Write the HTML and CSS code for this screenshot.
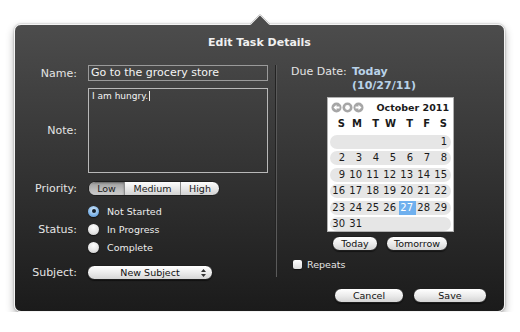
FILE: index.html
```html
<!DOCTYPE html>
<html lang="en">
<head>
  <meta charset="UTF-8" />
  <title>Edit Task Details</title>
  <link rel="stylesheet" href="styles.css">
</head>
<body>
  <div class="panel">
    <div class="beak"></div>
    <h1 class="title">Edit Task Details</h1>

    <div class="columns">
      <div class="form">
        <div class="row name-row">
          <span class="lbl">Name:</span>
          <div class="text-field">Go to the grocery store</div>
        </div>
        <div class="row note-row">
          <span class="lbl">Note:</span>
          <div class="note-field">I am hungry.<span class="caret"></span></div>
        </div>
        <div class="row priority-row">
          <span class="lbl">Priority:</span>
          <div class="segmented">
            <span class="seg low on">Low</span><span class="seg medium">Medium</span><span class="seg high">High</span>
          </div>
        </div>
        <div class="row status-row">
          <span class="lbl">Status:</span>
          <div class="radios">
            <div class="radio on"><span class="knob"></span>Not Started</div>
            <div class="radio"><span class="knob"></span>In Progress</div>
            <div class="radio"><span class="knob"></span>Complete</div>
          </div>
        </div>
        <div class="row subject-row">
          <span class="lbl">Subject:</span>
          <div class="popup">
            <span>New Subject</span>
            <svg class="updown" width="5" height="8" viewBox="0 0 5 8"><path d="M2.5 0 L5 3 H0 Z M0 5 H5 L2.5 8 Z" fill="#333"/></svg>
          </div>
        </div>
      </div>

      <div class="due">
        <div class="due-line">
          <span class="due-lbl">Due Date:</span>
          <span class="due-val">Today<br>(10/27/11)</span>
        </div>

        <div class="cal">
          <div class="cal-head">
            <svg class="nav" width="33" height="11" viewBox="0 0 33 11">
              <circle cx="5.5" cy="5.5" r="5" fill="#a6a6a6"/>
              <path d="M2.5 5.5 L5.5 2.8 V4.4 H8.5 V6.6 H5.5 V8.2 Z" fill="#fff"/>
              <circle cx="16.5" cy="5.5" r="5" fill="#a6a6a6"/>
              <circle cx="16.5" cy="5.5" r="2.4" fill="#fff"/>
              <circle cx="27.5" cy="5.5" r="5" fill="#a6a6a6"/>
              <path d="M30.5 5.5 L27.5 2.8 V4.4 H24.5 V6.6 H27.5 V8.2 Z" fill="#fff"/>
            </svg>
            <span class="month">October 2011</span>
          </div>
          <div class="wk head"><span>S</span><span>M</span><span>T</span><span>W</span><span>T</span><span>F</span><span>S</span></div>
          <div class="wk pill"><span></span><span></span><span></span><span></span><span></span><span></span><span>1</span></div>
          <div class="wk pill"><span>2</span><span>3</span><span>4</span><span>5</span><span>6</span><span>7</span><span>8</span></div>
          <div class="wk pill"><span>9</span><span>10</span><span>11</span><span>12</span><span>13</span><span>14</span><span>15</span></div>
          <div class="wk pill"><span>16</span><span>17</span><span>18</span><span>19</span><span>20</span><span>21</span><span>22</span></div>
          <div class="wk pill"><span>23</span><span>24</span><span>25</span><span>26</span><span class="sel">27</span><span>28</span><span>29</span></div>
          <div class="wk pill"><span>30</span><span>31</span><span></span><span></span><span></span><span></span><span></span></div>
        </div>

        <div class="quick">
          <button class="btn today">Today</button>
          <button class="btn tomorrow">Tomorrow</button>
        </div>

        <div class="repeats"><span class="check"></span>Repeats</div>
      </div>
    </div>

    <div class="footer">
      <button class="btn cancel">Cancel</button>
      <button class="btn save">Save</button>
    </div>
  </div>
</body>
</html>
```

FILE: styles.css
```css
body {
  margin: 0;
  background: #fff;
  font-family: 'DejaVu Sans', Verdana, sans-serif;
  color: #e6e6e6;
}

.panel {
  position: relative;
  box-sizing: border-box;
  width: 491px;
  height: 288px;
  margin: 24px 0 0 14px;
  border: 1px solid #f4f4f4;
  border-radius: 7px;
  background: linear-gradient(#4c4c4c, #1b1b1b);
  box-shadow: 0 0 2px rgba(0,0,0,0.35), 0 4px 9px rgba(0,0,0,0.3);
}

.beak {
  position: absolute;
  left: 238px;
  top: -8px;
  width: 13px;
  height: 13px;
  background: #4c4c4c;
  border-top: 1px solid #f4f4f4;
  border-left: 1px solid #f4f4f4;
  transform: rotate(45deg);
}

.title {
  margin: 0 0 15px;
  padding-top: 11px;
  font-size: 11px;
  line-height: 14px;
  font-weight: bold;
  text-align: center;
  color: #f0f0f0;
}

.columns {
  display: flex;
  height: 212px;
}

/* left side */
.form {
  width: 261px;
}
.row {
  display: flex;
}
.lbl {
  width: 62px;
  margin-right: 11px;
  text-align: right;
  font-size: 11px;
  align-self: center;
  color: #e4e4e4;
}
.text-field {
  box-sizing: border-box;
  width: 180px;
  height: 16px;
  border: 1px solid #9a9a9a;
  padding-left: 2px;
  font-size: 11px;
  line-height: 14px;
  color: #f4f4f4;
}
.note-row {
  margin-top: 7px;
}
.note-field {
  box-sizing: border-box;
  width: 180px;
  height: 85px;
  border: 1px solid #b8b8b8;
  padding: 2px 3px;
  font-size: 9px;
  line-height: 11px;
  color: #f4f4f4;
}
.caret {
  display: inline-block;
  width: 1px;
  height: 10px;
  margin-left: 1px;
  vertical-align: -2px;
  background: #eee;
}

.priority-row {
  margin-top: 8px;
}
.segmented {
  display: flex;
  height: 15px;
  border: 1px solid #1e1e1e;
  border-radius: 8px;
  overflow: hidden;
  box-sizing: border-box;
  background: linear-gradient(#fdfdfd, #e6e6e6 55%, #d2d2d2);
}
.seg {
  font-size: 9.5px;
  line-height: 13px;
  color: #1a1a1a;
  text-align: center;
  border-left: 1px solid #8c8c8c;
}
.seg.low { width: 35px; border-left: none; }
.seg.medium { width: 55px; }
.seg.high { width: 38px; }
.seg.on {
  background: linear-gradient(#9c9c9c, #bdbdbd 60%, #cbcbcb);
  box-shadow: inset 0 1px 2px rgba(0,0,0,0.35);
}

.status-row {
  margin-top: 6px;
}
.radios {
  display: flex;
  flex-direction: column;
}
.radio {
  display: flex;
  align-items: center;
  height: 18px;
  font-size: 9.5px;
  color: #ececec;
}
.knob {
  box-sizing: border-box;
  width: 11px;
  height: 11px;
  margin-right: 8px;
  border-radius: 50%;
  background: radial-gradient(circle at 50% 30%, #fff, #e4e4e4 60%, #bdbdbd);
  box-shadow: 0 1px 1px rgba(0,0,0,0.6);
  display: flex;
  align-items: center;
  justify-content: center;
}
.radio.on .knob {
  background: radial-gradient(circle at 50% 35%, #d8ebfb, #7fb4e8 60%, #4b86c8);
}
.radio.on .knob::after {
  content: '';
  width: 4px;
  height: 4px;
  border-radius: 50%;
  background: #15202c;
}

.subject-row {
  margin-top: 9px;
}
.popup {
  position: relative;
  box-sizing: border-box;
  width: 126px;
  height: 15px;
  margin-left: -1px;
  border: 1px solid #1e1e1e;
  border-radius: 8px;
  background: linear-gradient(#ffffff, #ececec 50%, #d6d6d6);
  box-shadow: 0 1px 1px rgba(0,0,0,0.5);
  font-size: 9.5px;
  line-height: 13px;
  color: #111;
  text-align: center;
}
.updown {
  position: absolute;
  right: 6px;
  top: 3px;
}

/* right side */
.due {
  flex: 1;
  border-left: 1px solid #5a5a5a;
  box-shadow: -1px 0 #232323;
}
.due-line {
  display: flex;
  padding-left: 14px;
  font-size: 11px;
  line-height: 14px;
}
.due-lbl {
  width: 61px;
  color: #e4e4e4;
}
.due-val {
  font-weight: bold;
  color: #b9d2e8;
}

.cal {
  box-sizing: border-box;
  width: 127px;
  height: 135px;
  margin: 4px 0 0 50px;
  padding: 0 2px;
  background: #fff;
  border: 1px solid #b0b0b0;
  color: #1a1a1a;
}
.cal-head {
  display: flex;
  align-items: center;
  justify-content: space-between;
  height: 18px;
  padding: 0 2px 0 1px;
}
.nav {
  display: block;
}
.month {
  font-size: 9.5px;
  font-weight: bold;
}
.wk {
  display: grid;
  grid-template-columns: repeat(7, 17px);
  box-sizing: border-box;
  width: 121px;
  padding-left: 1px;
  font-size: 10px;
}
.wk span {
  text-align: right;
  padding-right: 3px;
  line-height: 14px;
}
.wk.head {
  height: 16px;
  align-items: center;
  font-weight: bold;
  margin-bottom: 3px;
}
.pill {
  height: 14px;
  margin-bottom: 2.4px;
  border-radius: 7px;
  background: #e6e6e6;
}
.pill .sel {
  background: #6fb0ee;
  color: #fff;
}

.quick {
  display: flex;
  justify-content: center;
  gap: 8px;
  margin-top: 4px;
  padding-right: 1px;
}
.btn {
  box-sizing: border-box;
  height: 15px;
  padding: 0;
  border: 1px solid #1e1e1e;
  border-radius: 8px;
  background: linear-gradient(#ffffff, #ececec 50%, #d4d4d4);
  box-shadow: 0 1px 1px rgba(0,0,0,0.5);
  font-family: inherit;
  font-size: 9.5px;
  line-height: 13px;
  color: #111;
}
.btn.today { width: 46px; }
.btn.tomorrow { width: 62px; }

.repeats {
  display: flex;
  align-items: center;
  margin-top: 8px;
  padding-left: 16px;
  font-size: 9.5px;
  color: #e6e6e6;
}
.check {
  width: 9px;
  height: 9px;
  margin-right: 5px;
  border-radius: 2px;
  background: linear-gradient(#fff, #dcdcdc);
  box-shadow: 0 1px 1px rgba(0,0,0,0.6);
}

.footer {
  display: flex;
  justify-content: flex-end;
  gap: 9px;
  margin-top: 11px;
  padding-right: 17px;
}
.btn.cancel { width: 70px; }
.btn.save { width: 74px; }
```
